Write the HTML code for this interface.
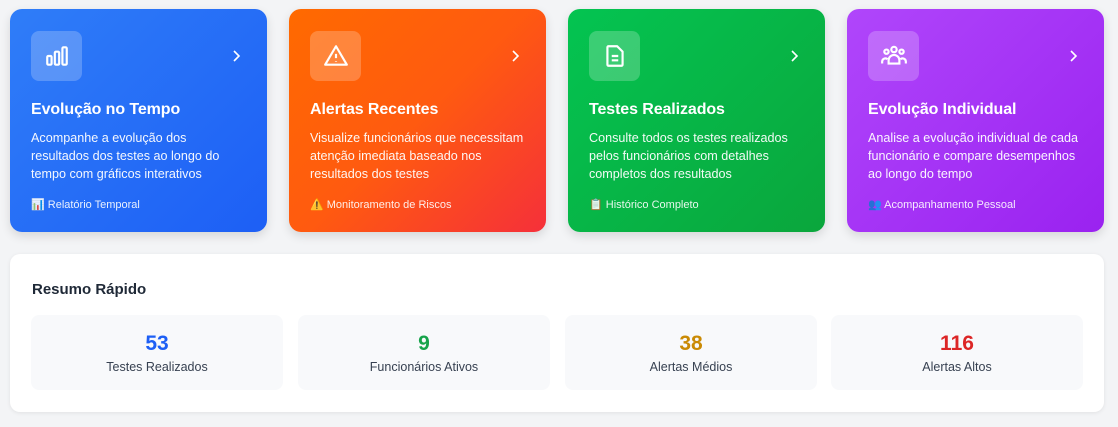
<!DOCTYPE html>
<html><head><meta charset="utf-8"><style>
*{box-sizing:border-box;margin:0;padding:0}
body{width:1118px;height:427px;background:#f3f4f6;font-family:"Liberation Sans",sans-serif;position:relative;overflow:hidden}
.card{position:absolute;top:9px;width:257px;height:223px;border-radius:12px;color:#fff;padding:22px 21px;box-shadow:0 4px 10px rgba(0,0,0,.12)}
.ib{width:51px;height:50px;border-radius:8px;background:rgba(255,255,255,.22);display:flex;align-items:center;justify-content:center}
.ch{position:absolute;right:24px;top:40px}
h3{font-size:16px;font-weight:bold;margin-top:20px;letter-spacing:-.1px}
p{font-size:12.6px;line-height:18px;margin-top:10px;opacity:.95;white-space:nowrap}
.ft{font-size:11px;margin-top:15px;opacity:.9}
.panel{position:absolute;left:10px;top:254px;width:1094px;height:158px;background:#fff;border-radius:10px;box-shadow:0 1px 4px rgba(0,0,0,.08)}
.panel h2{position:absolute;left:22px;top:27px;font-size:15px;font-weight:bold;color:#1f2937}
.st{position:absolute;top:61px;height:75px;width:252px;background:#f8f9fb;border-radius:8px;text-align:center}
.st b{display:block;font-size:21px;margin-top:17px}
.st span{display:block;font-size:12.5px;color:#374151;margin-top:4px}
</style></head><body>
<div class="card" style="left:10px;background:linear-gradient(135deg,#2f7df8,#1d5ff5)">
<div class="ib"><svg width="26" height="26" viewBox="0 0 24 24" fill="none" stroke="#fff" stroke-width="2"><rect x="3" y="12" width="4" height="8" rx="1"/><rect x="10" y="8" width="4" height="12" rx="1"/><rect x="17" y="4" width="4" height="16" rx="1"/></svg></div>
<svg class="ch" width="12" height="14" viewBox="0 0 12 14" fill="none" stroke="#fff" stroke-width="1.6"><path d="M3 2l5 5-5 5"/></svg>
<h3>Evolução no Tempo</h3><p>Acompanhe a evolução dos<br>resultados dos testes ao longo do<br>tempo com gráficos interativos</p><div class="ft">📊 Relatório Temporal</div></div>
<div class="card" style="left:289px;background:linear-gradient(135deg,#ff6a00,#ff5a10 50%,#f5303a)">
<div class="ib"><svg width="26" height="26" viewBox="0 0 24 24" fill="none" stroke="#fff" stroke-width="2" stroke-linejoin="round"><path d="M12 3L2 20h20z"/><path d="M12 10v4M12 17v.5"/></svg></div>
<svg class="ch" width="12" height="14" viewBox="0 0 12 14" fill="none" stroke="#fff" stroke-width="1.6"><path d="M3 2l5 5-5 5"/></svg>
<h3>Alertas Recentes</h3><p>Visualize funcionários que necessitam<br>atenção imediata baseado nos<br>resultados dos testes</p><div class="ft">⚠️ Monitoramento de Riscos</div></div>
<div class="card" style="left:568px;background:linear-gradient(135deg,#04c451,#0aa63c)">
<div class="ib"><svg width="26" height="26" viewBox="0 0 24 24" fill="none" stroke="#fff" stroke-width="2" stroke-linejoin="round"><path d="M6 3h8l5 5v12a1 1 0 0 1-1 1H6a1 1 0 0 1-1-1V4a1 1 0 0 1 1-1z"/><path d="M9 12h6M9 16h6"/></svg></div>
<svg class="ch" width="12" height="14" viewBox="0 0 12 14" fill="none" stroke="#fff" stroke-width="1.6"><path d="M3 2l5 5-5 5"/></svg>
<h3>Testes Realizados</h3><p>Consulte todos os testes realizados<br>pelos funcionários com detalhes<br>completos dos resultados</p><div class="ft">📋 Histórico Completo</div></div>
<div class="card" style="left:847px;background:linear-gradient(135deg,#b046fb,#9a22f0)">
<div class="ib"><svg width="28" height="26" viewBox="0 0 26 24" fill="none" stroke="#fff" stroke-width="2"><circle cx="13" cy="6" r="2.5"/><circle cx="6" cy="8" r="2"/><circle cx="20" cy="8" r="2"/><path d="M8 19v-3a5 5 0 0 1 10 0v3zM2 19v-2a3 3 0 0 1 5-2M24 19v-2a3 3 0 0 0-5-2"/></svg></div>
<svg class="ch" width="12" height="14" viewBox="0 0 12 14" fill="none" stroke="#fff" stroke-width="1.6"><path d="M3 2l5 5-5 5"/></svg>
<h3>Evolução Individual</h3><p>Analise a evolução individual de cada<br>funcionário e compare desempenhos<br>ao longo do tempo</p><div class="ft">👥 Acompanhamento Pessoal</div></div>
<div class="panel"><h2>Resumo Rápido</h2>
<div class="st" style="left:21px"><b style="color:#1d5ff5">53</b><span>Testes Realizados</span></div>
<div class="st" style="left:288px"><b style="color:#16a34a">9</b><span>Funcionários Ativos</span></div>
<div class="st" style="left:555px"><b style="color:#ca8a04">38</b><span>Alertas Médios</span></div>
<div class="st" style="left:821px"><b style="color:#dc2626">116</b><span>Alertas Altos</span></div>
</div>
</body></html>
